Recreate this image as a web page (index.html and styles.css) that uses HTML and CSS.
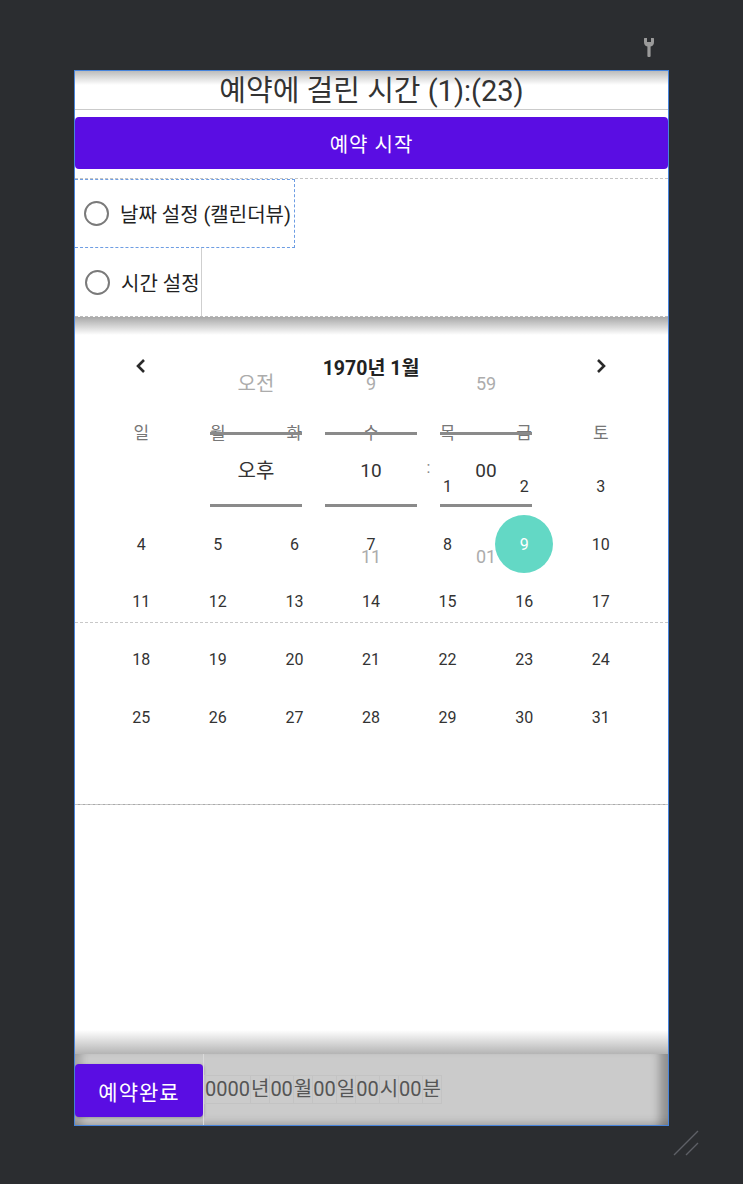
FILE: index.html
```html
<!DOCTYPE html>
<html lang="ko">
<head>
    <meta charset="UTF-8">
    <meta name="viewport" content="width=device-width, initial-scale=1.0">
    <title>예약</title>
    <link rel="stylesheet" href="styles.css">
</head>
<body>
    <div class="canvas">
        <div class="toolbar">
            <svg class="wrench" width="10" height="19" viewBox="0 0 10 19">
                <path d="M0 0.6 Q0 0 0.6 0 H3 V4 H7 V0 H9.4 Q10 0 10 0.6 V4 Q10 7.6 6.6 8.6 V18 Q6.6 19 5.6 19 H4.4 Q3.4 19 3.4 18 V8.6 Q0 7.6 0 4 Z" fill="#9a9a9a"/>
            </svg>
        </div>

        <div class="device">
            <div class="title">예약에 걸린 시간 (1):(23)</div>

            <div class="start-wrap">
                <button class="btn btn-start">예약 시작</button>
            </div>

            <div class="radio-group">
                <label class="radio radio-date"><span class="dot"></span>날짜 설정 (캘린더뷰)</label>
                <label class="radio radio-time"><span class="dot"></span>시간 설정</label>
            </div>

            <div class="calendar">
                <div class="cal-head">
                    <svg class="arrow" width="10" height="14" viewBox="0 0 10 14"><path d="M8 1 L2 7 L8 13" /></svg>
                    <span class="month">1970년 1월</span>
                    <svg class="arrow" width="10" height="14" viewBox="0 0 10 14"><path d="M2 1 L8 7 L2 13" /></svg>
                </div>
                <div class="cal-grid" id="calGrid">
                    <span class="wd">일</span><span class="wd">월</span><span class="wd">화</span><span class="wd">수</span><span class="wd">목</span><span class="wd">금</span><span class="wd">토</span>
                </div>

                <!-- time picker sits over the calendar in the preview -->
                <div class="picker">
                    <div class="wheel wheel-ampm">
                        <div class="item">오전</div>
                        <div class="current">오후</div>
                        <div class="item next"></div>
                    </div>
                    <div class="wheel">
                        <div class="item">9</div>
                        <div class="current">10</div>
                        <div class="item next">11</div>
                    </div>
                    <div class="sep">:</div>
                    <div class="wheel">
                        <div class="item">59</div>
                        <div class="current">00</div>
                        <div class="item next">01</div>
                    </div>
                </div>
            </div>

            <div class="filler"></div>

            <div class="bottom-bar">
                <button class="btn btn-done">예약완료</button>
                <div class="stamp">
                    <span>0000</span><span>년</span><span>00</span><span>월</span><span>00</span><span>일</span><span>00</span><span>시</span><span>00</span><span>분</span>
                </div>
            </div>
        </div>

        <div class="resize">
            <svg width="30" height="30" viewBox="0 0 30 30">
                <path d="M2 26 L26 2 M14 26 L26 14" stroke="#5e6066" stroke-width="1.4" fill="none"/>
            </svg>
        </div>
    </div>

    <script>
        // January 1970 starts on a Thursday
        var grid = document.getElementById('calGrid');
        var firstDay = 4;
        for (var i = 0; i < firstDay; i++) {
            grid.appendChild(document.createElement('span'));
        }
        for (var d = 1; d <= 31; d++) {
            var cell = document.createElement('span');
            cell.classList.add('day');
            if (d === 9) {
                var mark = document.createElement('span');
                mark.classList.add('sel');
                mark.textContent = d;
                cell.appendChild(mark);
            } else {
                cell.textContent = d;
            }
            grid.appendChild(cell);
        }
    </script>
</body>
</html>
```

FILE: styles.css
```css
* {
    box-sizing: border-box;
}
body {
    margin: 0;
    background-color: #2b2d30;
    font-family: Roboto, "Noto Sans CJK KR", sans-serif;
}
.canvas {
    width: 743px;
    height: 1184px;
    padding: 38px 0 0 74px;
}
.toolbar {
    width: 595px;
    height: 19px;
    margin-bottom: 13px;
    padding-right: 15px;
    display: flex;
    justify-content: flex-end;
}
.device {
    width: 595px;
    height: 1056px;
    border: 1px solid #4784dc;
    background: #fff;
    display: flex;
    flex-direction: column;
}
.title {
    height: 39px;
    border-bottom: 1px solid #cbcbcb;
    background: linear-gradient(#bcbcbc, #fff 14px);
    text-align: center;
    font-size: 29px;
    line-height: 41px;
    color: #333;
}
.start-wrap {
    height: 69px;
    padding: 7px 0 9px;
    border-bottom: 1px dashed #c4c4c4;
}
.btn {
    border: none;
    background-color: #5a0de3;
    color: #fff;
    border-radius: 4px;
    font-family: Roboto, "Noto Sans CJK KR", sans-serif;
    cursor: pointer;
}
.btn-start {
    width: 100%;
    height: 52px;
    font-size: 20px;
    letter-spacing: 1px;
}
.radio-group {
    height: 138px;
    border-bottom: 1px dashed #bbb;
    display: flex;
    flex-direction: column;
    align-items: flex-start;
}
.radio {
    display: flex;
    align-items: center;
    font-size: 20px;
    color: #222;
}
.radio-date {
    width: 220px;
    height: 69px;
    padding-left: 9px;
    border: 1px dashed #6d9de3;
    border-left: none;
}
.radio-time {
    width: 127px;
    height: 68px;
    padding-left: 10px;
    border-right: 1px solid #cfcfcf;
}
.dot {
    width: 25px;
    height: 25px;
    margin-right: 11px;
    border: 2.5px solid #7a7a7a;
    border-radius: 50%;
    flex-shrink: 0;
}
.calendar {
    position: relative;
    height: 488px;
    padding: 0 29px 0 28px;
    border-bottom: 1px dashed #c8c8c8;
    background: linear-gradient(#a8a8a8, #fff 18px);
}
.cal-head {
    height: 40px;
    margin-top: 29px;
    display: grid;
    grid-template-columns: 1fr 5fr 1fr;
    align-items: center;
    justify-items: center;
}
.arrow path {
    fill: none;
    stroke: #2a2a2a;
    stroke-width: 2.6;
}
.month {
    font-size: 19.5px;
    font-weight: bold;
    color: #222;
}
.cal-grid {
    margin-top: 18px;
    display: grid;
    grid-template-columns: repeat(7, 1fr);
    grid-template-rows: 54px repeat(6, 57.6px);
    align-items: center;
    justify-items: center;
}
.wd {
    font-size: 17px;
    color: #777;
}
.day {
    font-size: 16px;
    color: #333;
}
.sel {
    position: relative;
    z-index: 3;
    width: 58px;
    height: 58px;
    border-radius: 50%;
    background-color: #63d8c5;
    color: #fff;
    display: flex;
    align-items: center;
    justify-content: center;
}
.picker {
    position: absolute;
    top: 0;
    left: 0;
    right: 0;
    height: 306px;
    z-index: 1;
    padding: 47px 0 0 135px;
    border-bottom: 1px dashed #c8c8c8;
    display: flex;
    align-items: flex-start;
}
.wheel {
    width: 92px;
    display: flex;
    flex-direction: column;
    text-align: center;
}
.wheel-ampm {
    margin-right: 23px;
}
.wheel-ampm .item,
.wheel-ampm .current {
    font-size: 20px;
}
.item {
    height: 40px;
    line-height: 40px;
    font-size: 18px;
    color: #acacac;
}
.item.next {
    margin-top: 30px;
}
.current {
    height: 75px;
    margin-top: 28px;
    padding-top: 3px;
    border-top: 3px solid #8a8a8a;
    border-bottom: 3px solid #8a8a8a;
    line-height: 66px;
    font-size: 19px;
    color: #333;
}
.sep {
    width: 23px;
    height: 75px;
    margin-top: 68px;
    line-height: 72px;
    text-align: center;
    font-size: 16px;
    color: #888;
}
.filler {
    flex: 1;
    background: linear-gradient(#fff calc(100% - 24px), #b4b4b4);
}
.bottom-bar {
    height: 71px;
    display: flex;
    align-items: flex-start;
    background-color: #cbcbcb;
    box-shadow: inset 14px 0 10px -8px rgba(0, 0, 0, 0.2),
                inset -14px 0 10px -6px rgba(0, 0, 0, 0.3),
                inset 0 -12px 10px -10px rgba(0, 0, 0, 0.2);
}
.btn-done {
    width: 128px;
    height: 53px;
    margin-top: 10px;
    font-size: 21px;
    letter-spacing: 1px;
    box-shadow: 1px 1px 3px rgba(0, 0, 0, 0.25);
}
.stamp {
    height: 100%;
    padding-left: 1px;
    border-left: 1px solid #dadada;
    display: flex;
    align-items: center;
}
.stamp span {
    border: 1px solid #c3c3c3;
    margin-left: -1px;
    line-height: 27px;
    font-size: 20px;
    color: #555;
}
.resize {
    margin: 3px 0 0 598px;
    height: 30px;
}
```
